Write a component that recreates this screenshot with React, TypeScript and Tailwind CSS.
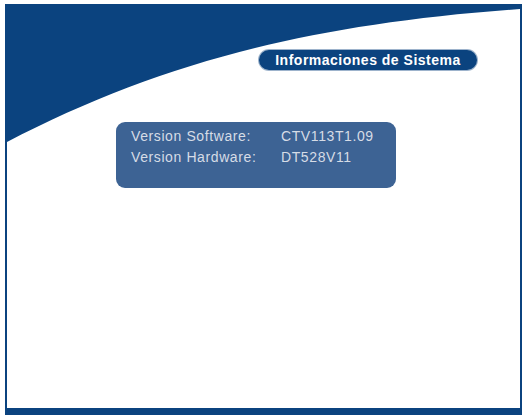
import React from 'react';

const rows = [
  { label: 'Version Software:', value: 'CTV113T1.09' },
  { label: 'Version Hardware:', value: 'DT528V11' },
];

const App: React.FC = () => {
  return (
    <div
      className="w-[526px] h-[415px] bg-white pt-[4px] pl-[5px] pr-[4px] overflow-hidden"
      style={{ fontFamily: '"Liberation Sans", Arial, sans-serif' }}
    >
      <div className="relative h-full bg-white border-l-2 border-r-2 border-b-[7px] border-[#0b437f]">
        {/* blue swoosh background */}
        <svg
          className="absolute inset-0"
          width="513"
          height="404"
          viewBox="0 0 513 404"
          preserveAspectRatio="none"
        >
          <path d="M0 138 C150 60 300 20 513 5 L513 0 L0 0 Z" fill="#0b437f" />
        </svg>

        <div className="relative pt-[45px]">
          <div className="ml-[251px] w-[220px] h-[22px] rounded-full bg-[#0b437f] border border-white/60 flex items-center justify-center">
            <span className="text-white text-[14px] font-bold tracking-[0.5px] leading-none">
              Informaciones de Sistema
            </span>
          </div>

          <div className="mt-[51px] ml-[109px] w-[280px] h-[66px] rounded-[9px] bg-[#3d6394] pt-[4px] pl-[15px]">
            {rows.map((r) => (
              <div key={r.label} className="flex text-[14px] leading-[21px] tracking-[0.6px] text-[#d6dce6]">
                <span className="w-[150px]">{r.label}</span>
                <span>{r.value}</span>
              </div>
            ))}
          </div>
        </div>
      </div>
    </div>
  );
};

export default App;
